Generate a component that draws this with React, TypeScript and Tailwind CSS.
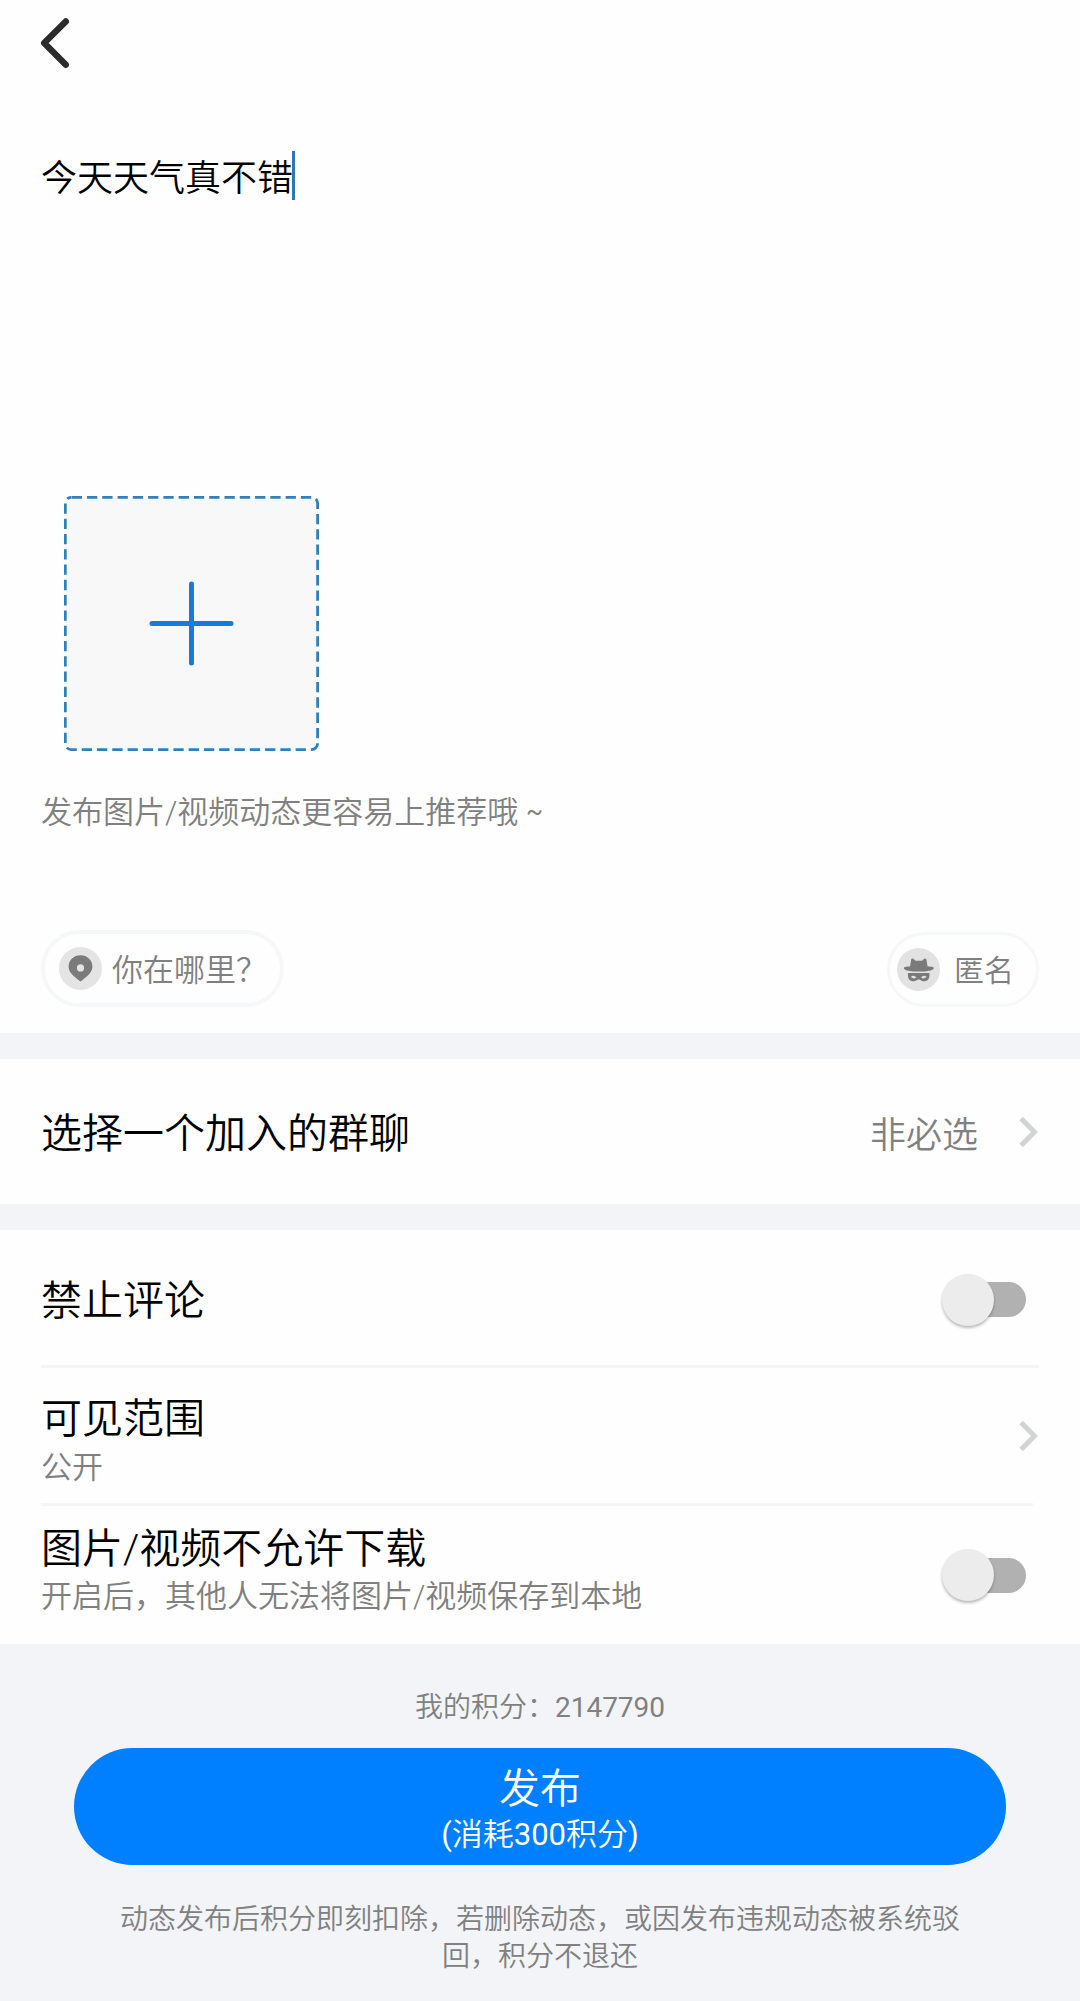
import type { ReactNode } from "react";

function ChevronRight() {
  return (
    <svg className="block h-[32px] w-[20px]" viewBox="0 0 20 32" fill="none" stroke="#d1d4d4" strokeWidth="5">
      <path d="M2.2 2.4 L15.4 16 L2.2 29.6" />
    </svg>
  );
}

function Toggle() {
  return (
    <div className="mr-[13px] flex h-[52px] w-[84px] items-center">
      <div className="z-10 h-[52px] w-[52px] shrink-0 rounded-full bg-[#ececec] shadow-[0_2px_3px_rgba(0,0,0,0.28)]" />
      <div className="-ml-[40px] h-[35px] w-[72px] shrink-0 rounded-full bg-[#b1b1b1]" />
    </div>
  );
}

function Title({ children }: { children: ReactNode }) {
  return <div className="text-[41px] leading-[50px] text-black">{children}</div>;
}

function Sub({ children }: { children: ReactNode }) {
  return <div className="text-[31px] leading-[40px] text-[#808080]">{children}</div>;
}

export default function App() {
  return (
    <div className="flex h-[2001px] w-[1080px] flex-col overflow-hidden whitespace-nowrap bg-[#fefefe] font-['Roboto','Noto_Sans_CJK_SC_DemiLight','Noto_Sans_CJK_SC',sans-serif] font-[350]">
      <header className="h-[86px] pl-[38px] pt-[17px]">
        <svg className="block h-[52px] w-[34px]" viewBox="0 0 34 52" fill="none" stroke="#2b2b2b" strokeWidth="6.4" strokeLinecap="round" strokeLinejoin="round">
          <path d="M27.8 4.4 L6.2 26 L27.8 47.8" />
        </svg>
      </header>

      <main className="flex h-[947px] flex-col px-[41px]">
        <div className="mt-[65px] flex h-[49px] items-center">
          <span className="pt-[8px] text-[36px] leading-[49px] text-black">今天天气真不错</span>
          <span className="-ml-px h-[49px] w-[3px] bg-[#2879b4]" />
        </div>

        <svg className="ml-[23px] mt-[296px] block h-[255px] w-[255px] shrink-0" viewBox="0 0 255 255" fill="none">
          <path
            d="M7.3 1.3 H247.6 A6 6 0 0 1 253.6 7.3 V247.6 A6 6 0 0 1 247.6 253.6 H7.3 A6 6 0 0 1 1.3 247.6 V7.3 A6 6 0 0 1 7.3 1.3 Z"
            fill="#f8f8f8"
            stroke="#2f80bd"
            strokeWidth="2.8"
            strokeDasharray="10.3 4.98"
            strokeDashoffset="-0.4"
          />
          <path d="M88 127.5 H167 M127.5 88 V167" stroke="#187bd8" strokeWidth="5" strokeLinecap="round" />
          <path d="M125 127.5 H130" stroke="#007fff" strokeWidth="5" />
        </svg>

        <p className="mt-[41px] text-[31px] leading-[42px] text-[#808080]">
          发布图片/视频动态更容易上推荐哦 <span className="align-[3px] text-[25px] font-normal leading-none">~</span>
        </p>

        <div className="mt-[96px] flex h-[77px] items-center justify-between">
          <div className="flex h-[77px] w-[243px] items-center rounded-full border-4 border-[#f6f7f8] pl-[14px]">
            <svg className="block h-[43px] w-[43px]" viewBox="0 0 43 43">
              <circle cx="21.5" cy="21.5" r="21.5" fill="#e4e4e4" />
              <path fillRule="evenodd" fill="#7b7b7b" d="M21.5 8.3 C14.8 8.3 9.6 13.2 9.6 19.6 C9.6 25.5 14 29 21.5 34.6 C29 29 33.4 25.5 33.4 19.6 C33.4 13.2 28.2 8.3 21.5 8.3 Z M21.5 17.3 A3.6 3.6 0 1 1 21.5 24.5 A3.6 3.6 0 1 1 21.5 17.3 Z" />
            </svg>
            <span className="ml-[10px] pt-[4px] text-[31px] leading-[40px] text-[#808080]">你在哪里？</span>
          </div>
          <div className="mt-[2px] flex h-[75px] w-[152px] items-center rounded-full border-[3px] border-[#f6f7f8] pl-[7px]">
            <svg className="block h-[43px] w-[43px]" viewBox="0 0 43 43">
              <circle cx="21.5" cy="21.5" r="21.5" fill="#e2e2e2" />
              <g fill="#7a7a7a">
                <path d="M13 18.6 L14.2 11.4 Q15 9.8 16.4 10.8 L18.6 12.8 H25 L27.2 10.8 Q28.6 9.8 29.4 11.4 L30.6 18.6 Q36.8 17.8 36.8 20.2 C36.4 22.6 29 23.6 21.8 23.6 C14.6 23.6 7.2 22.6 6.8 20.2 Q7 17.8 13 18.6 Z" />
                <path fillRule="evenodd" d="M11 25 H32.4 C32.8 30 31.4 33.2 27.4 33.2 C24.2 33.2 23.6 31.4 21.7 31.4 C19.8 31.4 19.2 33.2 16 33.2 C12 33.2 10.6 30 11 25 Z M13.8 28.8 Q16.6 26.4 19.4 29.2 Q16.6 32 13.8 28.8 Z M24 29.2 Q26.8 26.4 29.6 28.8 Q26.8 32 24 29.2 Z" />
              </g>
            </svg>
            <span className="ml-[14px] pt-[3px] text-[30px] leading-[40px] text-[#808080]">匿名</span>
          </div>
        </div>
      </main>

      <div className="h-[26px] shrink-0 bg-[#f2f4f7]" />

      <section className="flex h-[145px] shrink-0 items-center justify-between px-[41px]">
        <div className="pt-[4px]">
          <Title>选择一个加入的群聊</Title>
        </div>
        <div className="flex items-center">
          <span className="mr-[41px] pt-[8px] text-[36px] leading-[46px] text-[#808080]">非必选</span>
          <ChevronRight />
        </div>
      </section>

      <div className="h-[26px] shrink-0 bg-[#f2f4f7]" />

      <section className="flex h-[414px] shrink-0 flex-col px-[41px]">
        <div className="flex h-[135px] items-center justify-between pt-[4px]">
          <div className="pt-[2px]">
            <Title>禁止评论</Title>
          </div>
          <Toggle />
        </div>
        <div className="h-[3px] bg-[#f4f5f5]" />
        <div className="flex h-[135px] items-center justify-between">
          <div className="flex flex-col gap-[4px] pt-[10px]">
            <Title>可见范围</Title>
            <Sub>公开</Sub>
          </div>
          <ChevronRight />
        </div>
        <div className="mr-[6px] h-[3px] bg-[#f4f5f5]" />
        <div className="flex h-[138px] items-center justify-between">
          <div className="flex flex-col gap-[3px] pb-[9px]">
            <Title>图片/视频不允许下载</Title>
            <Sub>开启后，其他人无法将图片/视频保存到本地</Sub>
          </div>
          <Toggle />
        </div>
      </section>

      <footer className="flex h-[357px] shrink-0 flex-col items-center bg-[#f2f4f8] pt-[45px]">
        <p className="text-[28px] leading-[38px] text-[#808080]">
          我的积分：<span className="font-normal">2147790</span>
        </p>
        <button className="mt-[21px] flex h-[117px] w-[932px] flex-col items-center rounded-full bg-[#007ffe] pt-[16px] text-white">
          <span className="text-[41px] leading-[50px]">发布</span>
          <span className="text-[31px] leading-[42px]">
            <span className="font-normal">(</span>消耗<span className="font-normal">300</span>积分<span className="font-normal">)</span>
          </span>
        </button>
        <p className="mt-[36px] w-[842px] whitespace-normal text-center text-[28px] leading-[37px] text-[#808080]">
          动态发布后积分即刻扣除，若删除动态，或因发布违规动态被系统驳回，积分不退还
        </p>
      </footer>
    </div>
  );
}
